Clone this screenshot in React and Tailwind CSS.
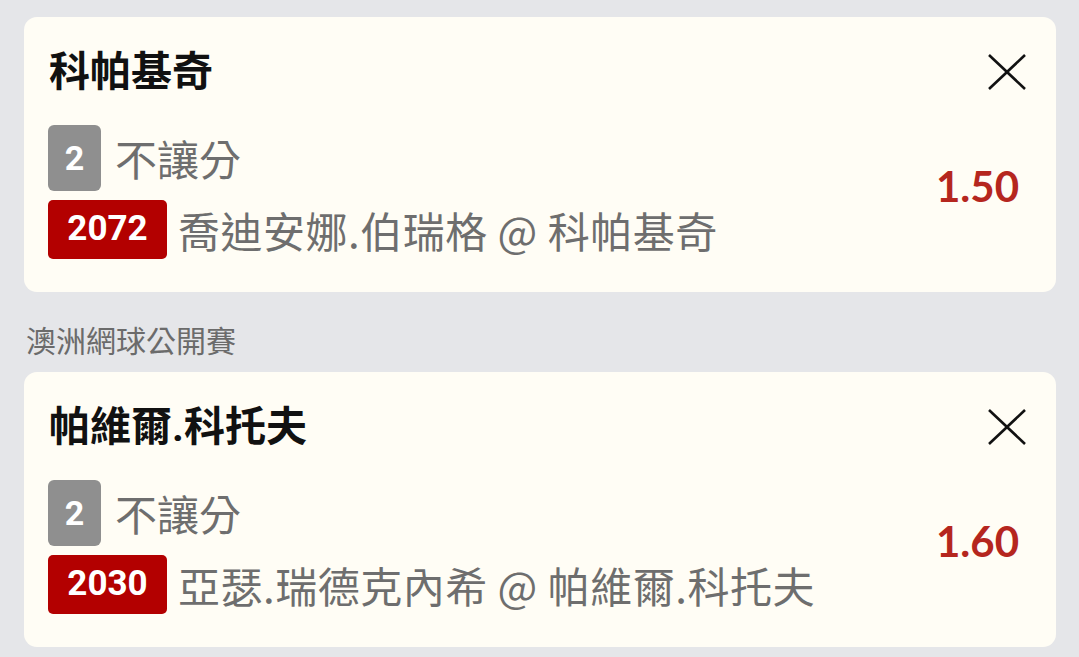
const bets = [
  {
    title: '科帕基奇',
    line: '2',
    market: '不讓分',
    code: '2072',
    match: '喬迪安娜.伯瑞格 @ 科帕基奇',
    odds: '1.50',
  },
  {
    league: '澳洲網球公開賽',
    title: '帕維爾.科托夫',
    line: '2',
    market: '不讓分',
    code: '2030',
    match: '亞瑟.瑞德克內希 @ 帕維爾.科托夫',
    odds: '1.60',
  },
];

const CloseIcon = () => (
  <svg width="38" height="38" viewBox="0 0 38 38" fill="none" stroke="#111" strokeWidth="2.6">
    <line x1="1" y1="2" x2="37" y2="36" />
    <line x1="37" y1="2" x2="1" y2="36" />
  </svg>
);

const BetCard = ({ bet }) => (
  <div className="rounded-[13px] bg-[#fffdf5] pl-6 pr-[30px] pt-[31px] pb-[33px]">
    <div className="flex items-center justify-between h-12">
      <h2 className="ml-[1px] text-[41px] leading-[48px] font-bold text-[#111]">{bet.title}</h2>
      <CloseIcon />
    </div>
    <div className="mt-[29px] flex items-center justify-between">
      <div className="flex flex-col gap-[9px]">
        <div className="flex items-center">
          <span className="flex h-[66px] w-[53px] items-center justify-center rounded-[6px] bg-[#8f8f8f] text-[34px] font-bold text-white font-['Roboto',sans-serif]">
            {bet.line}
          </span>
          <span className="ml-[14px] text-[42px] leading-[50px] text-[#6e6e6e] font-['Noto_Sans_CJK_TC',sans-serif]">
            {bet.market}
          </span>
        </div>
        <div className="flex items-center">
          <span className="flex h-[59px] w-[119px] items-center justify-center rounded-[5px] bg-[#b30000] text-[35px] font-bold text-white font-['Roboto',sans-serif]">
            {bet.code}
          </span>
          <span className="ml-[11px] text-[42px] leading-[50px] tracking-[0.5px] text-[#6e6e6e] font-['Noto_Sans_CJK_TC',sans-serif]">
            {bet.match}
          </span>
        </div>
      </div>
      <span className="mb-[12px] mr-[7px] font-['Lato',sans-serif] text-[42px] font-bold text-[#b5261e]">
        {bet.odds}
      </span>
    </div>
  </div>
);

export default function App() {
  return (
    <div className="min-h-screen bg-[#e5e6e9] pl-6 pr-[23px] pt-[17px] font-['Roboto','Noto_Sans_CJK_TC',sans-serif]">
      {bets.map((bet, i) => (
        <div key={i}>
          {bet.league && (
            <div className="mt-[32px] mb-[18px] pl-[2px] text-[30px] leading-[30px] text-[#6b6b6b] font-['Noto_Sans_CJK_TC',sans-serif]">
              {bet.league}
            </div>
          )}
          <BetCard bet={bet} />
        </div>
      ))}
    </div>
  );
}
